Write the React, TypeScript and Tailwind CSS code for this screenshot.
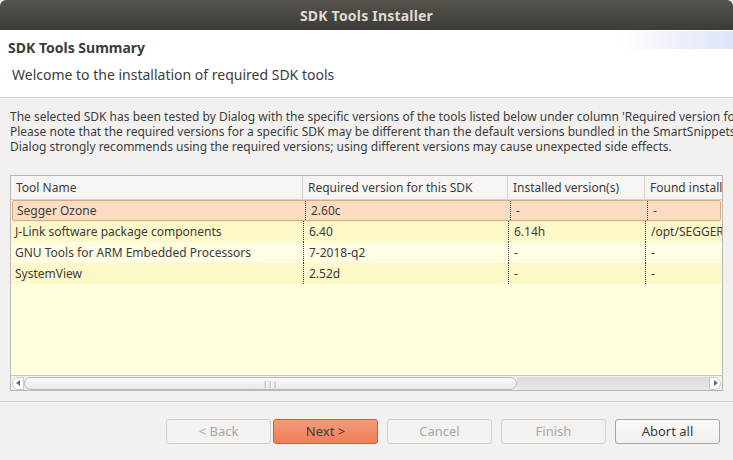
import React from "react";

const rows = [
  { name: "Segger Ozone", req: "2.60c", inst: "-", found: "-", bg: "bg-[#fbdcc0]", sel: true },
  { name: "J-Link software package components", req: "6.40", inst: "6.14h", found: "/opt/SEGGER/JLink", bg: "bg-[#fdf8c8]", sel: false },
  { name: "GNU Tools for ARM Embedded Processors", req: "7-2018-q2", inst: "-", found: "-", bg: "bg-[#fffde3]", sel: false },
  { name: "SystemView", req: "2.52d", inst: "-", found: "-", bg: "bg-[#fdf8c8]", sel: false },
];

function Btn({ label, variant, className = "" }: { label: string; variant: "dis" | "primary" | "normal"; className?: string }) {
  const cls =
    variant === "primary"
      ? "bg-gradient-to-b from-[#f69a78] to-[#ef7e56] border-[#c9623d] text-[#3c3c3c]"
      : variant === "normal"
      ? "bg-gradient-to-b from-[#fbfbfa] to-[#f0efee] border-[#a8a6a3] text-[#3c3c3c]"
      : "bg-[#f3f2f1] border-[#d3d1ce] text-[#a9a7a4]";
  return (
    <div className={`w-[105px] h-[25px] rounded-[3px] border flex items-center justify-center text-[13px] shrink-0 ${cls} ${className}`}>
      {label}
    </div>
  );
}

export default function App() {
  return (
    <div
      className="w-[733px] h-[460px] bg-[#f2f1f0] flex flex-col overflow-hidden text-[#3c3c3c]"
      style={{ fontFamily: '"Noto Sans", "Open Sans", sans-serif' }}
    >
      {/* title bar */}
      <div className="h-[30px] rounded-t-[6px] bg-gradient-to-b from-[#57544e] to-[#3d3b37] flex items-center justify-center shrink-0">
        <span className="text-[#dfdbd2] text-[14px] font-bold tracking-[0.2px]">SDK Tools Installer</span>
      </div>
      {/* header */}
      <div className="h-[68px] bg-white relative shrink-0 border-b border-[#d6d3cf]">
        <div className="absolute right-0 top-[1px] w-[115px] h-[18px] bg-gradient-to-r from-white to-[#dee4f8]" />
        <div className="relative pl-[8px] pt-[7px] text-[14px] font-bold text-[#3c3c3c]">SDK Tools Summary</div>
        <div className="relative pl-[12px] pt-[6px] text-[14px] text-[#3c3c3c]">Welcome to the installation of required SDK tools</div>
      </div>
      {/* body */}
      <div className="pt-[11px] pl-[10px] text-[12px] leading-[15px] whitespace-nowrap overflow-hidden">
        <div>The selected SDK has been tested by Dialog with the specific versions of the tools listed below under column 'Required version for this SDK'.</div>
        <div>Please note that the required versions for a specific SDK may be different than the default versions bundled in the SmartSnippets Studio.</div>
        <div>Dialog strongly recommends using the required versions; using different versions may cause unexpected side effects.</div>
      </div>
      {/* table */}
      <div className="mt-[21px] ml-[10px] w-[713px] h-[216px] border border-[#b9b7b3] bg-[#ffffdf] flex flex-col overflow-hidden text-[12px] shrink-0">
        <div className="h-[24px] bg-[#f6f5f4] border-b border-[#d6d4d0] flex shrink-0">
          <div className="w-[292px] border-r border-[#d6d4d0] pl-[5px] flex items-center">Tool Name</div>
          <div className="w-[205px] border-r border-[#d6d4d0] pl-[5px] flex items-center">Required version for this SDK</div>
          <div className="w-[137px] border-r border-[#d6d4d0] pl-[5px] flex items-center">Installed version(s)</div>
          <div className="flex-1 pl-[5px] flex items-center whitespace-nowrap overflow-hidden">Found installation</div>
        </div>
        <div className="flex flex-col">
          {rows.map((r, i) => (
            <div
              key={i}
              className={`h-[21px] flex ${r.bg} ${r.sel ? "border border-[#d9a883] rounded-[2px] mx-[1px]" : ""}`}
            >
              <div className="w-[292px] pl-[4px] flex items-center whitespace-nowrap overflow-hidden">{r.name}</div>
              <div className="w-[205px] border-l border-dotted border-[#3c3c3c] pl-[5px] flex items-center">{r.req}</div>
              <div className="w-[137px] border-l border-dotted border-[#3c3c3c] pl-[5px] flex items-center">{r.inst}</div>
              <div className="flex-1 border-l border-dotted border-[#3c3c3c] pl-[5px] flex items-center whitespace-nowrap overflow-hidden">{r.found}</div>
            </div>
          ))}
        </div>
        <div className="flex-1" />
        {/* scrollbar */}
        <div className="h-[15px] bg-[#f2f1f0] border-t border-[#c9c7c4] flex items-center shrink-0 px-[1px]">
          <div className="w-[12px] h-[13px] rounded-l-full border border-[#c9c7c4] bg-white flex items-center justify-center shrink-0">
            <svg width="5" height="6" viewBox="0 0 5 6"><path d="M4 0 L0 3 L4 6 Z" fill="#6e6c69" /></svg>
          </div>
          <div className="w-[493px] h-[13px] rounded-full border border-[#b9b7b3] bg-gradient-to-b from-[#fbfbfa] to-[#e9e8e6] flex items-center justify-center shrink-0">
            <span className="text-[7px] leading-none text-[#8a8885] tracking-[1px]">|||</span>
          </div>
          <div className="flex-1 h-[13px] bg-gradient-to-b from-[#dcdbd9] to-[#e9e8e6]" />
          <div className="w-[12px] h-[13px] rounded-r-full border border-[#c9c7c4] bg-white flex items-center justify-center shrink-0">
            <svg width="5" height="6" viewBox="0 0 5 6"><path d="M1 0 L5 3 L1 6 Z" fill="#6e6c69" /></svg>
          </div>
        </div>
      </div>
      {/* separator */}
      <div className="mt-[10px] h-[1px] bg-[#d6d3cf] shrink-0" />
      {/* buttons */}
      <div className="mt-[17px] flex pl-[166px]">
        <Btn label="< Back" variant="dis" />
        <Btn label="Next >" variant="primary" className="ml-[2px]" />
        <Btn label="Cancel" variant="dis" className="ml-[9px]" />
        <Btn label="Finish" variant="dis" className="ml-[9px]" />
        <Btn label="Abort all" variant="normal" className="ml-[9px]" />
      </div>
    </div>
  );
}
